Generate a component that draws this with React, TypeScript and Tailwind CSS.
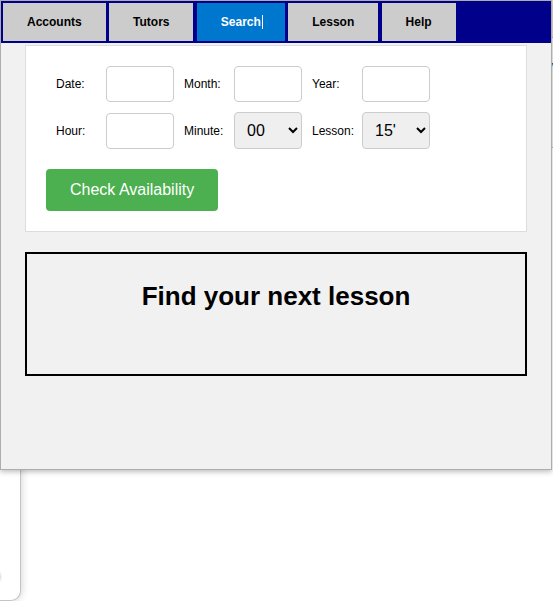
import type { ReactNode } from "react";

function Tab({ children, active = false }: { children: ReactNode; active?: boolean }) {
  return (
    <button
      type="button"
      aria-current={active ? "page" : undefined}
      className={
        "relative inline-block h-[38px] px-6 align-top font-bold " +
        (active ? "bg-[#0077cf] text-white" : "bg-[#cccccc] text-black")
      }
    >
      {children}
      {active && <span className="absolute top-3 left-16 ml-px h-[14px] w-px bg-white" />}
    </button>
  );
}

const control =
  "w-[68px] rounded-[4px] border border-[#cccccc] px-2 text-base text-black";

function TextField({ id, label }: { id: string; label: string }) {
  return (
    <>
      <label htmlFor={id}>{label}</label>
      <input id={id} type="text" className={control + " mr-[10px] h-9 bg-white"} />
    </>
  );
}

function SelectField({ id, label, options }: { id: string; label: string; options: string[] }) {
  return (
    <>
      <label htmlFor={id}>{label}</label>
      <select id={id} className={control + " h-[37px] bg-[#efefef]"}>
        {options.map((option) => (
          <option key={option}>{option}</option>
        ))}
      </select>
    </>
  );
}

export default function App() {
  return (
    <div className="relative flex min-h-screen flex-col overflow-hidden bg-white font-['Liberation_Sans',Arial,sans-serif] text-xs text-black">
      <div className="flex flex-1 items-stretch justify-between">
        <div className="relative w-[21px] overflow-hidden rounded-br-[10px] border-r border-b border-[#c4c4c4] bg-white shadow-[0_0_8px_rgba(0,0,0,0.2)]">
          <span className="absolute bottom-[17px] -left-3 size-3 rounded-full bg-white shadow-[0_0_3px_rgba(0,0,0,0.35)]" />
        </div>
        <div className="flex flex-col">
          <div className="h-[38px] border-b border-[#b5b5b5] bg-[#e3d5cc]" />
          <div className="h-[110px] border-b border-[#b5b5b5] bg-[#f1f1f1] pt-5">
            <a href="#day" className="block text-right leading-4 text-[#10305c]">
              y
            </a>
          </div>
        </div>
      </div>

      <main className="absolute top-0 right-px left-0 h-[470px] border border-[#adadad] bg-[#f1f1f1] shadow-[0_2px_5px_rgba(0,0,0,0.25)]">
        <nav className="h-[42px] bg-[#00008b] p-[2px]">
          <Tab>Accounts</Tab> <Tab>Tutors</Tab> <Tab active>Search</Tab> <Tab>Lesson</Tab>{" "}
          <Tab>Help</Tab>
        </nav>

        <div className="mx-6 mt-[2px] flex flex-col gap-5">
          <form className="border border-[#dddddd] bg-white p-5">
            <div className="ml-[10px] grid grid-cols-[50px_78px_50px_78px_50px_78px] items-center gap-y-[10px]">
              <TextField id="date" label="Date:" />
              <TextField id="month" label="Month:" />
              <TextField id="year" label="Year:" />
              <TextField id="hour" label="Hour:" />
              <SelectField id="minute" label="Minute:" options={["00", "15", "30", "45"]} />
              <SelectField id="lesson" label="Lesson:" options={["15'", "30'", "45'", "60'"]} />
            </div>
            <button
              type="button"
              className="mt-5 block h-[42px] rounded-[4px] bg-[#4caf50] px-6 text-base text-white"
            >
              Check Availability
            </button>
          </form>

          <section className="h-[124px] border-2 border-black pt-7 text-center">
            <h1 className="text-[26px] leading-7 font-bold">Find your next lesson</h1>
          </section>
        </div>
      </main>
    </div>
  );
}
